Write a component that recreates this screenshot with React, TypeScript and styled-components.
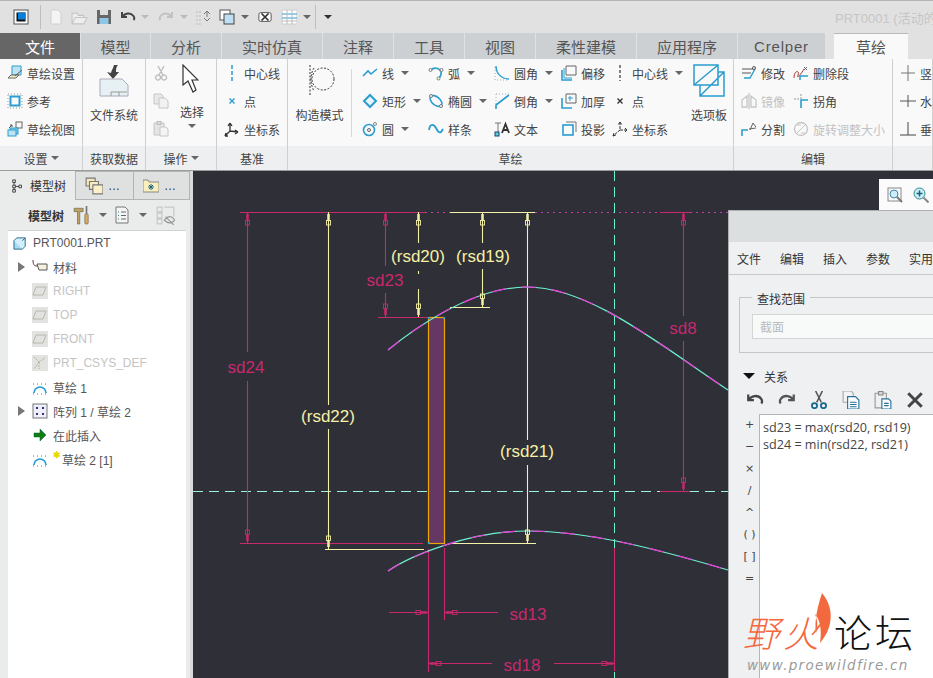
import React from 'react';
import styled, { createGlobalStyle } from 'styled-components';

const FONT = '"Liberation Sans", "Noto Sans CJK SC", sans-serif';
const BLUE = '#2a9dd0';
const PINK = '#c8286e';
const CREAM = '#f5f1a6';

const GlobalStyle = createGlobalStyle`
  html, body {
    margin: 0;
    padding: 0;
    overflow: hidden;
    background: #2f2f37;
  }
  * {
    box-sizing: border-box;
  }
`;

const Page = styled.div`
  width: 933px;
  height: 678px;
  display: flex;
  flex-direction: column;
  overflow: hidden;
  font-family: ${FONT};
  font-size: 12px;
  color: #444;
`;

/* ---------- icons ---------- */

const icons: Record<string, React.ReactNode> = {
  app: (
    <>
      <rect x="1" y="1" width="14" height="14" fill="#fff" stroke="#555" />
      <rect x="3.5" y="3.5" width="9" height="9" fill="#111" />
      <rect x="5" y="3.5" width="7.5" height="7" fill="#0a7fd8" />
    </>
  ),
  newFile: <path d="M3 1h7l3 3v11H3z" fill="#f4f4f4" stroke="#cfcfcf" />,
  open: <path d="M1 14V4h5l1 2h5v2M1 14l3-6h11l-3 6z" fill="#eee" stroke="#c4c4c4" />,
  save: (
    <>
      <path d="M1 1h14v14H1z" fill="#666" />
      <rect x="4" y="1" width="8" height="5" fill="#ddd" />
      <rect x="3.5" y="9" width="9" height="6" fill="#8ec6e6" />
    </>
  ),
  undo: <path d="M2 3v5h5M2.5 8c2-4 8-5 11-1 1 1.500 1 3 0 4" stroke="#444" strokeWidth="2" />,
  redo: <path d="M14 3v5H9M13.500 8c-2-4-8-5-11-1-1 1.500-1 3 0 4" stroke="#c2c2c2" strokeWidth="2" />,
  regen: (
    <>
      <path d="M1 3h5M1 7h6M1 11h6M1 15h5" stroke="#bbb" strokeDasharray="2 1" />
      <path d="M9 5l3-3 3 3M12 2v6M9 9l3 3 3-3" stroke="#777" />
    </>
  ),
  windows: (
    <>
      <rect x="1" y="1" width="10" height="10" fill="#fff" stroke="#555" />
      <rect x="5" y="5" width="10" height="10" fill="#bfe0f2" stroke="#444" />
    </>
  ),
  closeX: (
    <>
      <rect x="1" y="3" width="14" height="10" rx="2" fill="#fff" stroke="#444" />
      <path d="M4 4l8 8M12 4l-8 8" stroke="#333" strokeWidth="2" />
    </>
  ),
  gridView: (
    <>
      <rect x="1" y="1" width="15" height="14" fill="#fff" stroke="#ccc" />
      <path d="M1 5h15M1 9h15" stroke={BLUE} />
      <path d="M1 12h15M6 1v14M11 1v14" stroke="#bbb" />
    </>
  ),
  sketchSetup: (
    <>
      <path d="M5 1h9v9H5z" fill="#bfe2f3" stroke={BLUE} />
      <path d="M1 13l3-3h8l-3 3z" fill="#f5efc8" stroke="#666" />
      <path d="M8 11l7-6" stroke="#555" />
    </>
  ),
  reference: (
    <>
      <rect x="1" y="1" width="14" height="14" stroke="#999" strokeDasharray="1 2" />
      <rect x="3.500" y="3.500" width="9" height="9" stroke={BLUE} strokeWidth="2" />
    </>
  ),
  sketchView: (
    <>
      <rect x="9" y="1" width="6" height="6" stroke="#666" />
      <path d="M2 7l3-3M5 4H3M5 4v2" stroke="#555" />
      <rect x="3" y="7" width="8" height="6" fill="#8ccbe9" stroke={BLUE} />
      <rect x="1" y="9" width="8" height="6" fill="#bfe2f3" stroke={BLUE} />
    </>
  ),
  cut: <path d="M5 1l5 9M11 1l-5 9M5 10a2.500 2.500 0 1 0 .1 0M11 10a2.500 2.500 0 1 0 .1 0" stroke="#bdbdbd" strokeWidth="1.400" />,
  copy: (
    <>
      <path d="M1 1h7l2 2v8H1z" fill="#e8e8e8" stroke="#c6c6c6" />
      <path d="M6 5h6l3 3v7H6z" fill="#f2f2f2" stroke="#c6c6c6" />
    </>
  ),
  paste: (
    <>
      <path d="M1 2h10v12H1z" fill="#e4e4e4" stroke="#c6c6c6" />
      <rect x="4" y="0.500" width="4" height="3" fill="#ddd" stroke="#bbb" />
      <path d="M7 6h6l2 2v7H7z" fill="#f4f4f4" stroke="#c6c6c6" />
    </>
  ),
  centerlineBlue: <path d="M8 0v16" stroke={BLUE} strokeWidth="1.500" strokeDasharray="4 2" />,
  centerlineDark: <path d="M8 0v16" stroke="#333" strokeWidth="1.200" strokeDasharray="3 2" />,
  pointBlue: <path d="M5.500 5.500l5 5M10.500 5.500l-5 5" stroke={BLUE} strokeWidth="1.400" />,
  pointDark: <path d="M5.500 5.500l5 5M10.500 5.500l-5 5" stroke="#333" strokeWidth="1.400" />,
  csys: <path d="M6 2v8M6 2L4 5M6 2l2 3M6 10l8 1M14 11l-3-2M14 11l-3 2M6 10l-5 5M1 15l1-3M1 15l3 0" stroke="#333" strokeWidth="1.300" />,
  csysDashed: <path d="M8 1v8M8 1L6 4M8 1l2 3M8 9h7M15 9l-2-2M15 9l-2 2M8 9l-7 6M1 15l1-3M1 15l3-1" stroke="#333" strokeDasharray="3 1" />,
  line: <path d="M1 11l5-5 3 3 6-5" stroke={BLUE} strokeWidth="1.600" />,
  rect: <path d="M8 2l6 6-6 6-6-6z" stroke={BLUE} strokeWidth="2" fill="#e8f5fb" />,
  circle: (
    <>
      <circle cx="7" cy="9" r="5.500" stroke={BLUE} strokeWidth="1.600" />
      <circle cx="7" cy="9" r="1.500" stroke="#666" />
      <circle cx="13" cy="3" r="1.500" stroke="#888" />
    </>
  ),
  arc: (
    <>
      <path d="M3 5a6 6 0 0 1 10 2c.5 2 0 4-2 6" stroke={BLUE} strokeWidth="1.600" />
      <circle cx="2.500" cy="5" r="1.500" fill="#fff" stroke="#777" />
      <circle cx="13.500" cy="5" r="1.500" fill="#fff" stroke="#777" />
      <circle cx="10.500" cy="13.500" r="1.500" fill="#fff" stroke="#777" />
    </>
  ),
  ellipse: (
    <>
      <ellipse cx="8" cy="8" rx="7" ry="4" transform="rotate(40 8 8)" stroke={BLUE} strokeWidth="1.600" />
      <circle cx="3" cy="3" r="1.500" fill="#fff" stroke="#777" />
      <circle cx="13" cy="13" r="1.500" fill="#fff" stroke="#777" />
    </>
  ),
  spline: <path d="M1 9c1-7 5-6 7-2s4 7 7 1" stroke={BLUE} strokeWidth="1.800" />,
  fillet: (
    <>
      <path d="M1 2v13h13" stroke="#aaa" strokeDasharray="1 2" />
      <path d="M2 1c0 7 5 13 13 13" stroke={BLUE} strokeWidth="1.400" />
    </>
  ),
  chamfer: (
    <>
      <path d="M2 1h13M2 1v14" stroke="#aaa" strokeDasharray="1 2" />
      <path d="M15 2L2 12v4" stroke={BLUE} strokeWidth="1.600" />
    </>
  ),
  text: (
    <>
      <path d="M1 2h6M4 2v10" stroke="#777" />
      <path d="M8 12l3.500-9 3.500 9M9.500 9h4" stroke="#333" strokeWidth="1.800" />
      <rect x="1" y="11" width="4" height="4" fill="#6cc" stroke="#147" />
    </>
  ),
  offset: (
    <>
      <path d="M5 1h10v9H5z" stroke="#666" />
      <path d="M1 5v10h10" stroke={BLUE} strokeWidth="1.600" />
      <path d="M3 3v10h8" stroke={BLUE} />
    </>
  ),
  thicken: (
    <>
      <path d="M5 1h10v9H5z" stroke="#666" />
      <path d="M1 5v10h10" stroke={BLUE} strokeWidth="1.600" />
      <path d="M9 3v5M7 5h5" stroke={BLUE} />
    </>
  ),
  project: (
    <>
      <path d="M5 1h10v10" stroke="#777" />
      <rect x="2" y="4" width="10" height="10" stroke={BLUE} strokeWidth="1.600" />
    </>
  ),
  modify: (
    <>
      <path d="M1 4h11M1 8h9" stroke="#555" />
      <path d="M3 13h6l5-9" stroke={BLUE} strokeWidth="1.400" />
      <circle cx="13" cy="3" r="1.500" stroke="#555" />
    </>
  ),
  deleteSeg: (
    <>
      <path d="M1 13c0-8 6-8 4-3s4-2 6-6" stroke="#a33" />
      <path d="M7 15v-4h8" stroke={BLUE} strokeWidth="1.500" />
      <path d="M11 2l3 3M14 2l-3 3" stroke="#666" />
    </>
  ),
  mirror: <path d="M8 0v16M6 3L1 7v7h5zM10 3l5 4v7h-5z" stroke="#c6c6c6" strokeWidth="1.300" />,
  corner: (
    <>
      <path d="M1 6h6M8 1v6" stroke="#999" strokeDasharray="2 1" />
      <path d="M15 7H8v8" stroke={BLUE} strokeWidth="1.600" />
    </>
  ),
  divide: (
    <>
      <path d="M1 15V9h6" stroke={BLUE} strokeWidth="1.600" />
      <path d="M8 8l7-1M9 9l3-7 3 4" stroke="#666" />
    </>
  ),
  rotate: (
    <>
      <circle cx="8" cy="8" r="6.500" stroke="#c6c6c6" strokeWidth="1.300" />
      <path d="M4 12l8-8M4 4h4M12 12H8" stroke="#c6c6c6" />
    </>
  ),
  vertical: <path d="M8 0v16M1 8h14" stroke="#777" />,
  horizontal: <path d="M8 2v12M0 8h16" stroke="#555" />,
  perpendicular: <path d="M8 1v13M0 14h16" stroke="#444" />,
  box: (
    <>
      <path d="M1 5h9v9H1z" fill="#a6dcf3" stroke="#268" />
      <path d="M1 5l3-3h9v9l-3 3" fill="#d2effb" stroke="#268" />
      <path d="M10 5l3-3" stroke="#268" />
    </>
  ),
  tag: (
    <>
      <path d="M1 1c0 6 2 6 5 6" stroke="#633" />
      <path d="M5 5h10v6H7z" fill="#f7f2e0" stroke="#555" />
    </>
  ),
  plane: (
    <>
      <rect width="16" height="16" fill="#e2e2e0" />
      <path d="M4 4h10l-3 8H1z" stroke="#b8b8a6" />
    </>
  ),
  csysTree: (
    <>
      <rect width="16" height="16" fill="#e2e2e0" />
      <path d="M2 2l5 5 6-4M7 7v7M7 7l-5 7" stroke="#b0b09c" strokeDasharray="2 1" />
    </>
  ),
  sketchTree: (
    <>
      <path d="M2 14a6 6 0 0 1 12 0" stroke={BLUE} strokeWidth="1.700" />
      <path d="M1 5h14M1 15h14" stroke="#777" strokeDasharray="1 3" />
    </>
  ),
  pattern: (
    <>
      <rect x="1" y="1" width="14" height="14" fill="#eef" stroke="#777" />
      <path d="M4 4h2v2H4zM10 4h2v2h-2zM4 10h2v2H4zM10 10h2v2h-2z" fill="#336" />
    </>
  ),
  insertArrow: <path d="M2 6h6V2l6 6-6 6v-4H2z" fill="#0f7d0f" stroke="#063" strokeWidth="0.500" />,
  treeNodes: (
    <>
      <path d="M2 1h3v3H2zM2 7h3v3H2zM2 12h3v3H2zM9 7h3v3H9zM5 8.500h4M3.500 4v3M3.500 10v2" stroke="#333" />
    </>
  ),
  folders: (
    <>
      <path d="M1 8V1h8v7z" fill="#f6e8b8" stroke="#777" />
      <path d="M4 11V4h8v7z" fill="#f8ecc0" stroke="#777" />
      <path d="M7 15V7h9v8z" fill="#fbf0c8" stroke="#777" />
    </>
  ),
  starFolder: (
    <>
      <path d="M0 14V2h5l1 2h10v10z" fill="#faeebc" stroke="#888" />
      <path d="M8 6v6M5 9h6M6 7l4 4M10 7l-4 4" stroke="#16688c" />
    </>
  ),
  tools: (
    <>
      <path d="M1 2h8v3H6v11H4V5H1z" fill="#c2a263" stroke="#665" strokeWidth="0.600" />
      <path d="M12 0v7" stroke="#777" strokeWidth="1.500" />
      <rect x="10.500" y="7" width="3" height="9" rx="1" fill="#d6ac5e" stroke="#765" strokeWidth="0.600" />
    </>
  ),
  listDoc: (
    <>
      <path d="M2 0h9l3 3v13H2z" fill="#f5f5f5" stroke="#777" />
      <path d="M7 5h5M7 8.500h5M7 12h5" stroke="#667" />
      <path d="M4 5h1M4 8.500h1M4 12h1" stroke="#287" />
    </>
  ),
  treeHide: (
    <>
      <path d="M1 1h4v4H1zM1 6h4v4H1zM1 11h4v4H1zM7 1h8v8" stroke="#c8c8c8" />
      <path d="M7 12c3-4 6-4 9 0-3 3-6 3-9 0zM8 9l7 7" stroke="#999" />
    </>
  ),
  search: (
    <>
      <rect x="1" y="1" width="13" height="13" stroke="#888" />
      <circle cx="7" cy="7" r="4" fill="#cdebf8" stroke="#48a" />
      <path d="M10 10l5 5" stroke="#777" strokeWidth="2" />
    </>
  ),
  zoomIn: (
    <>
      <circle cx="6.500" cy="6.500" r="5.500" fill="#cdebf8" stroke="#388" />
      <path d="M6.500 3.500v6M3.500 6.500h6" stroke="#167" strokeWidth="1.500" />
      <path d="M10.500 10.500l5 5" stroke="#888" strokeWidth="2" />
    </>
  ),
  dlgUndo: <path d="M2 3v5h5M2.500 8c2-4 8-5 11-1 1 1.500 1 3 0 4" stroke="#444" strokeWidth="2" />,
  dlgRedo: <path d="M14 3v5H9M13.500 8c-2-4-8-5-11-1-1 1.500-1 3 0 4" stroke="#555" strokeWidth="2" />,
  dlgCut: (
    <>
      <path d="M5 0l5 10M11 0L6 10" stroke="#555" strokeWidth="1.400" />
      <circle cx="4" cy="13" r="2.300" stroke="#17688e" strokeWidth="1.600" />
      <circle cx="12" cy="13" r="2.300" stroke="#17688e" strokeWidth="1.600" />
    </>
  ),
  dlgCopy: (
    <>
      <path d="M1 0h7l2 2v8H1z" fill="#f3f3f3" stroke="#aaa" />
      <path d="M5 5h7l3 3v8H5z" fill="#fff" stroke="#27709a" />
      <path d="M7 10h6M7 12h6M7 14h6" stroke="#27709a" />
    </>
  ),
  dlgPaste: (
    <>
      <path d="M1 2h10v13H1z" fill="#f0f0f0" stroke="#999" />
      <rect x="4" y="0.500" width="4" height="3" fill="#ddd" stroke="#888" />
      <path d="M7 7h6l2 2v7H7z" fill="#fff" stroke="#27709a" />
      <path d="M9 11h4M9 13h4" stroke="#27709a" />
    </>
  ),
  dlgDelete: <path d="M2 2l12 12M14 2L2 14" stroke="#444" strokeWidth="2.600" />,
};

const IconSvg = styled.svg`
  display: block;
  flex: none;
`;

const Icon: React.FC<{ name: string; size?: number; height?: number }> = ({ name, size = 16, height }) => (
  <IconSvg width={size} height={height ?? size} viewBox="0 0 16 16" fill="none">
    {icons[name]}
  </IconSvg>
);

const Caret = styled.span<{ $color?: string; $size?: number }>`
  display: block;
  flex: none;
  width: 0;
  height: 0;
  border-left: ${(p) => p.$size ?? 4}px solid transparent;
  border-right: ${(p) => p.$size ?? 4}px solid transparent;
  border-top: ${(p) => p.$size ?? 4}px solid ${(p) => p.$color ?? '#666'};
`;

/* ---------- title bar ---------- */

const TitleBar = styled.div`
  height: 33px;
  flex: none;
  display: flex;
  align-items: center;
  padding-left: 13px;
  background: #e1e1e1;
  border-top: 1px solid #b5b5b5;
  position: relative;
`;

const QuickGroup = styled.div<{ $gap?: number; $left?: number }>`
  display: flex;
  align-items: center;
  gap: ${(p) => p.$gap ?? 0}px;
  margin-left: ${(p) => p.$left ?? 0}px;
`;

const QuickSep = styled.div<{ $left: number }>`
  width: 1px;
  height: 24px;
  background: #bdbdbd;
  margin-left: ${(p) => p.$left}px;
`;

const TitleText = styled.div`
  margin-left: auto;
  width: 98px;
  white-space: nowrap;
  overflow: hidden;
  font-size: 13px;
  color: #c6c6c6;
`;

/* ---------- tabs ---------- */

const TabBar = styled.div`
  height: 26px;
  flex: none;
  display: flex;
  background: #e1e1e1;
`;

const Tab = styled.div<{ $width: number; $kind?: 'file' | 'active'; $gap?: number }>`
  width: ${(p) => p.$width}px;
  margin-left: ${(p) => p.$gap ?? 0}px;
  margin-right: 1px;
  display: flex;
  align-items: center;
  justify-content: center;
  font-size: 15px;
  background: ${(p) => (p.$kind === 'file' ? '#666' : p.$kind === 'active' ? '#f9f9f9' : '#cdd0d3')};
  color: ${(p) => (p.$kind === 'file' ? '#fff' : '#555')};
  border-top: ${(p) => (p.$kind === 'active' ? '1px solid #b8b8b8' : 'none')};
`;

const LatinTabLabel = styled.span`
  letter-spacing: 0.8px;
`;

/* ---------- ribbon ---------- */

const Ribbon = styled.div`
  height: 112px;
  flex: none;
  display: flex;
  background: #f9f9f9;
  border-bottom: 1px solid #9c9c9c;
`;

const Group = styled.div<{ $width?: number }>`
  width: ${(p) => (p.$width ? `${p.$width}px` : 'auto')};
  flex: ${(p) => (p.$width ? 'none' : '1')};
  display: flex;
  flex-direction: column;
  border-right: 1px solid #cfcfcf;
  overflow: hidden;
`;

const GroupBody = styled.div<{ $left?: number }>`
  height: 87px;
  display: flex;
  padding-left: ${(p) => p.$left ?? 0}px;
`;

const GroupFooter = styled.div`
  flex: 1;
  display: flex;
  align-items: center;
  justify-content: center;
  gap: 3px;
  background: #eeeff0;
  color: #444;
  white-space: nowrap;
`;

const ToolCol = styled.div<{ $width: number }>`
  width: ${(p) => p.$width}px;
  flex: none;
  display: flex;
  flex-direction: column;
`;

const ToolRow = styled.div<{ $off?: boolean }>`
  height: 28px;
  display: flex;
  align-items: center;
  gap: 4px;
  white-space: nowrap;
  color: ${(p) => (p.$off ? '#c2c2c2' : '#444')};
`;

const ToolCaret = styled(Caret)`
  margin-left: 3px;
`;

const LargeTool = styled.div<{ $width: number }>`
  width: ${(p) => p.$width}px;
  flex: none;
  display: flex;
  flex-direction: column;
  align-items: center;
  padding-top: 5px;
`;

const LargeLabel = styled.div`
  height: 28px;
  margin-top: 3px;
  display: flex;
  align-items: center;
  white-space: nowrap;
`;

const Divider = styled.div`
  width: 1px;
  height: 68px;
  margin: 10px 10px 0 0;
  background: #d8d8d8;
  flex: none;
`;

type Tool = [string, string, boolean?, boolean?];

const Tools: React.FC<{ width: number; items: Tool[] }> = ({ width, items }) => (
  <ToolCol $width={width}>
    {items.map(([icon, label, caret, off]) => (
      <ToolRow key={label} $off={off}>
        <Icon name={icon} />
        {label}
        {caret && <ToolCaret />}
      </ToolRow>
    ))}
  </ToolCol>
);

const SystemIcon = () => (
  <IconSvg width="30" height="33" viewBox="0 0 30 33" fill="none">
    <path d="M15 1c-1 4-3 6-3 8l-4-1 6 7 6-7-3 0c0-3 0-5 2-7z" fill="#444" />
    <path d="M1 15h22l6 6v11H1z" fill="#e7f0f3" stroke="#aab" />
    <path d="M12 28h16M12 32v-4M20 32v-4" stroke="#999" />
  </IconSvg>
);

const ArrowSvg = styled(IconSvg)`
  margin-right: 3px;
`;

const ArrowIcon = () => (
  <ArrowSvg width="17" height="30" viewBox="0 0 17 30" fill="none">
    <path d="M1 1v20l5-4 5 11 3-2-4-10h6z" fill="#fff" stroke="#333" strokeWidth="1.200" />
  </ArrowSvg>
);

const ConstructionIcon = () => (
  <IconSvg width="30" height="33" viewBox="0 0 30 33" fill="none">
    <circle cx="18" cy="15" r="11" stroke="#333" strokeDasharray="2 1.500" />
    <path d="M5 1v30M9 4c-4 6-4 16 0 23" stroke="#333" strokeDasharray="2 1.500" />
  </IconSvg>
);

const PaletteIcon = () => (
  <IconSvg width="32" height="33" viewBox="0 0 32 33" fill="none">
    <path d="M1 1h24v20H1zM7 21v11h24V8H25M7 32L31 8M1 21L25 1" stroke={BLUE} strokeWidth="1.500" />
  </IconSvg>
);

const SelectCaret = styled(Caret)`
  margin-top: -1px;
`;

/* ---------- workspace ---------- */

const Workspace = styled.div`
  flex: 1;
  display: flex;
  min-height: 0;
`;

const Sidebar = styled.div`
  width: 193px;
  flex: none;
  display: flex;
  flex-direction: column;
  background: #eaecec;
  border-right: 3px solid #d9dbdb;
`;

const SideTabs = styled.div`
  height: 29px;
  flex: none;
  display: flex;
`;

const SideTab = styled.div<{ $active?: boolean; $width: number }>`
  width: ${(p) => p.$width}px;
  display: flex;
  align-items: center;
  gap: 5px;
  padding-left: ${(p) => (p.$active ? 11 : 9)}px;
  background: ${(p) => (p.$active ? '#eaecec' : '#dfe1e1')};
  border-right: 1px solid #b4b4b4;
  border-bottom: ${(p) => (p.$active ? 'none' : '1px solid #b4b4b4')};
  border-top: ${(p) => (p.$active ? 'none' : '1px solid #b4b4b4')};
  color: #333;
`;

const TreeBar = styled.div`
  height: 30px;
  flex: none;
  display: flex;
  align-items: center;
  padding-left: 28px;
  color: #333;
  font-weight: bold;
`;

const TreeBarTools = styled.div`
  display: flex;
  align-items: center;
  margin-left: 9px;
  font-weight: normal;
`;

const TreeGap = styled.div<{ $width: number }>`
  width: ${(p) => p.$width}px;
  display: flex;
  justify-content: center;
  flex: none;
`;

const Tree = styled.div`
  flex: 1;
  margin: 0 4px 0 8px;
  background: #fff;
  border-top: 1px solid #d2d2d2;
`;

const TreeRow = styled.div<{ $off?: boolean; $root?: boolean }>`
  height: 24px;
  display: flex;
  align-items: center;
  gap: 5px;
  padding-left: ${(p) => (p.$root ? 5 : 24)}px;
  position: relative;
  color: ${(p) => (p.$off ? '#c4c4c4' : '#555')};
  white-space: nowrap;
`;

const Expander = styled.span`
  position: absolute;
  left: 10px;
  top: 7px;
  width: 0;
  height: 0;
  border-top: 5px solid transparent;
  border-bottom: 5px solid transparent;
  border-left: 7px solid #777;
`;

const NewMark = styled.span`
  display: block;
  width: 7px;
  margin: -7px -3px 0 0;
  color: #e8d800;
  font-size: 9px;
  line-height: 9px;
  font-weight: bold;
`;

const Canvas = styled.div`
  flex: 1;
  position: relative;
  background: #2f2f37;
  overflow: hidden;
`;

const Drawing = styled.svg`
  display: block;
`;

const ViewStrip = styled.div`
  position: absolute;
  left: 686px;
  top: 8px;
  width: 60px;
  height: 32px;
  display: flex;
  align-items: center;
  gap: 10px;
  padding-left: 8px;
  background: #fbfbfb;
`;

/* ---------- relations dialog ---------- */

const Dialog = styled.div`
  position: absolute;
  left: 535px;
  top: 39px;
  width: 220px;
  height: 469px;
  display: flex;
  flex-direction: column;
  background: #eef0f1;
  border: 1px solid #aeb0b0;
  border-right: none;
`;

const DialogTitle = styled.div`
  height: 31px;
  flex: none;
  background: #dcdfdf;
`;

const DialogMenu = styled.div`
  height: 33px;
  flex: none;
  display: flex;
  align-items: center;
  gap: 19px;
  padding-left: 8px;
  color: #333;
  border-bottom: 1px solid #c6c8c8;
  white-space: nowrap;
`;

const Fieldset = styled.div`
  position: relative;
  height: 56px;
  margin: 22px 0 0 10px;
  padding: 16px 0 0 12px;
  border: 1px solid #c4c6c6;
  border-right: none;
`;

const Legend = styled.span`
  position: absolute;
  left: 12px;
  top: -8px;
  padding: 0 5px;
  background: #eef0f1;
  color: #333;
`;

const FieldInput = styled.div`
  height: 25px;
  display: flex;
  align-items: center;
  padding-left: 7px;
  background: #f8f9f9;
  border: 1px solid #d4d6d6;
  border-right: none;
  color: #bbb;
`;

const SectionHead = styled.div`
  height: 16px;
  margin: 15px 0 0 14px;
  display: flex;
  align-items: center;
  gap: 9px;
  color: #333;
`;

const DialogTools = styled.div`
  height: 28px;
  margin-top: 2px;
  display: flex;
  align-items: center;
  gap: 14px;
  padding-left: 17px;
`;

const Editor = styled.div`
  flex: 1;
  display: flex;
  min-height: 0;
`;

const Gutter = styled.div`
  width: 30px;
  flex: none;
  display: flex;
  flex-direction: column;
  margin-top: -1px;
  padding-left: 11px;
  color: #444;
`;

const GutterKey = styled.div`
  height: 22px;
  display: flex;
  align-items: center;
  justify-content: center;
  font-size: 11px;
  font-family: "DejaVu Sans", sans-serif;
`;

const EditorText = styled.div`
  flex: 1;
  padding: 4px 0 0 3px;
  background: #fff;
  border: 1px solid #b4b6b6;
  border-right: none;
  border-bottom: none;
  font-family: "Open Sans", sans-serif;
  font-size: 12.6px;
  line-height: 17px;
  color: #444;
  white-space: pre;
`;

/* ---------- watermark ---------- */

const Watermark = styled.div`
  position: absolute;
  left: 553px;
  top: 420px;
  width: 190px;
  height: 86px;
`;

const Flame = styled.svg`
  position: absolute;
  left: 60px;
  top: 2px;
`;

const BrandRed = styled.span`
  position: absolute;
  left: -3px;
  top: 20px;
  font-size: 36px;
  line-height: 40px;
  font-style: italic;
  font-weight: 300;
  color: #f4683e;
  font-family: "Noto Sans CJK SC", sans-serif;
  letter-spacing: 4px;
`;

const BrandBlack = styled.span`
  position: absolute;
  left: 88px;
  top: 20px;
  font-size: 38px;
  line-height: 40px;
  font-weight: 300;
  color: #111;
  font-family: "Noto Sans CJK SC", sans-serif;
  letter-spacing: 3px;
`;

const BrandUrl = styled.span`
  position: absolute;
  left: 1px;
  top: 67px;
  font-size: 13.5px;
  line-height: 14px;
  font-style: italic;
  letter-spacing: 1.3px;
  color: #9a9a9a;
  font-family: "DejaVu Sans", sans-serif;
  white-space: nowrap;
`;

/* ---------- sketch ---------- */

const DimArrow: React.FC<{ x: number; y: number; angle?: number; color: string }> = ({ x, y, angle = 0, color }) => (
  <g transform={`translate(${x} ${y}) rotate(${angle})`}>
    <rect x="-1.250" y="1" width="2.500" height="6.500" fill={color} />
    <rect x="-2" y="7.500" width="4" height="4.500" fill="none" stroke={color} strokeWidth="0.900" />
  </g>
);

type Seg = [number, number, number, number];

const pinkLines: Seg[] = [
  [240, 212.5, 425, 212.5],
  [247.5, 212, 247.5, 352],
  [247.5, 381, 247.5, 543],
  [385.5, 212, 385.5, 266],
  [385.5, 293, 385.5, 317],
  [378, 317.5, 428, 317.5],
  [240, 543.5, 423, 543.5],
  [660, 212.5, 690, 212.5],
  [683.5, 212, 683.5, 316],
  [683.5, 341, 683.5, 491],
  [660, 491.5, 690, 491.5],
  [428.5, 549, 428.5, 672],
  [444.5, 548, 444.5, 620],
  [614.5, 548, 614.5, 671],
  [389, 612.5, 428, 612.5],
  [444, 612.5, 498, 612.5],
  [428, 663.5, 492, 663.5],
  [554, 663.5, 614, 663.5],
];

const creamLines: Seg[] = [
  [450, 212.5, 535, 212.5],
  [328.5, 212, 328.5, 405],
  [328.5, 429, 328.5, 549],
  [418.5, 212, 418.5, 243],
  [418.5, 271, 418.5, 274],
  [418.5, 289, 418.5, 317],
  [482.5, 212, 482.5, 243],
  [482.5, 269, 482.5, 307],
  [450, 307.5, 490, 307.5],
  [527.5, 212, 527.5, 440],
  [527.5, 465, 527.5, 543],
  [450, 543.5, 536, 543.5],
  [325, 549.5, 424, 549.5],
];

const pinkArrows: [number, number, number?][] = [
  [247.5, 213],
  [385.5, 213],
  [385.5, 316, 180],
  [683.5, 213],
  [683.5, 490, 180],
  [247.5, 542, 180],
  [428, 612.5, 90],
  [445, 612.5, -90],
  [429, 663.5, -90],
  [614, 663.5, 90],
];

const creamArrows: [number, number, number?][] = [
  [328.5, 213],
  [418.5, 213],
  [418.5, 316, 180],
  [482.5, 213],
  [482.5, 306, 180],
  [527.5, 213],
  [527.5, 542, 180],
  [328.5, 548, 180],
];

const labels: [string, number, number, string][] = [
  ['sd24', 246, 373, PINK],
  ['sd23', 385, 286, PINK],
  ['sd8', 683, 334, PINK],
  ['sd13', 528, 620, PINK],
  ['sd18', 522, 671, PINK],
  ['(rsd20)', 418, 262, CREAM],
  ['(rsd19)', 483, 262, CREAM],
  ['(rsd22)', 328, 422, CREAM],
  ['(rsd21)', 527, 457, CREAM],
];

const Curve: React.FC<{ d: string }> = ({ d }) => (
  <>
    <path d={d} fill="none" stroke="#6ff2d2" strokeWidth="1.200" />
    <path d={d} fill="none" stroke="#ee36d8" strokeWidth="1.200" strokeDasharray="14 16" />
  </>
);

const Sketch = () => (
  <Drawing width="740" height="507" viewBox="193 171 740 507">
    <path d="M425 212.500H450M535 212.500H660M690 212.500H728" stroke="#c040b0" strokeDasharray="2 4" />
    <path d="M193 491.500H728" stroke="#9ff5da" strokeDasharray="10 6" />
    <path d="M614.500 171V548M614.500 672V678" stroke="#6ff2d2" strokeDasharray="10 6" />
    <rect x="428.500" y="317.500" width="16" height="226" fill="#643862" stroke="#f0a400" strokeWidth="1.200" />
    {pinkLines.map(([x1, y1, x2, y2]) => (
      <line key={`${x1}-${y1}-${x2}`} x1={x1} y1={y1} x2={x2} y2={y2} stroke={PINK} strokeWidth="1.100" />
    ))}
    {creamLines.map(([x1, y1, x2, y2]) => (
      <line key={`${x1}-${y1}-${x2}`} x1={x1} y1={y1} x2={x2} y2={y2} stroke={CREAM} strokeWidth="1.100" />
    ))}
    <Curve d="M388 350C410 332 470 287 527 287C590 287 660 345 728 390" />
    <Curve d="M388 571C410 556 470 531 527 531C590 531 660 550 728 570" />
    {pinkArrows.map(([x, y, a]) => (
      <DimArrow key={`${x}-${y}`} x={x} y={y} angle={a} color={PINK} />
    ))}
    {creamArrows.map(([x, y, a]) => (
      <DimArrow key={`${x}-${y}`} x={x} y={y} angle={a} color={CREAM} />
    ))}
    <path d="M428 317h2v2h-2zM443 317h2v2h-2zM428 542h2v2h-2z" fill="#2aa8d8" />
    {labels.map(([text, x, y, color]) => (
      <text key={text} x={x} y={y} fill={color} fontSize="17" textAnchor="middle" fontFamily={FONT}>
        {text}
      </text>
    ))}
  </Drawing>
);

/* ---------- page ---------- */

const tabs: { label: string; width: number; kind?: 'file' | 'active'; gap?: number }[] = [
  { label: '文件', width: 80, kind: 'file' },
  { label: '模型', width: 69 },
  { label: '分析', width: 70 },
  { label: '实时仿真', width: 100 },
  { label: '注释', width: 70 },
  { label: '工具', width: 70 },
  { label: '视图', width: 70 },
  { label: '柔性建模', width: 100 },
  { label: '应用程序', width: 100 },
  { label: 'Crelper', width: 87 },
  { label: '草绘', width: 74, kind: 'active', gap: 8 },
];

const treeRows: { icon: string; label: string; off?: boolean; expand?: boolean; isNew?: boolean }[] = [
  { icon: 'tag', label: '材料', expand: true },
  { icon: 'plane', label: 'RIGHT', off: true },
  { icon: 'plane', label: 'TOP', off: true },
  { icon: 'plane', label: 'FRONT', off: true },
  { icon: 'csysTree', label: 'PRT_CSYS_DEF', off: true },
  { icon: 'sketchTree', label: '草绘 1' },
  { icon: 'pattern', label: '阵列 1 / 草绘 2', expand: true },
  { icon: 'insertArrow', label: '在此插入' },
  { icon: 'sketchTree', label: '草绘 2 [1]', isNew: true },
];

const gutterKeys = ['+', '−', '×', '/', '^', '( )', '[ ]', '='];

const App: React.FC = () => (
  <Page>
    <GlobalStyle />
    <TitleBar>
      <Icon name="app" />
      <QuickSep $left={11} />
      <QuickGroup $left={7}>
        <Icon name="newFile" />
      </QuickGroup>
      <QuickGroup $left={7}>
        <Icon name="open" size={17} />
      </QuickGroup>
      <QuickGroup $left={8}>
        <Icon name="save" />
      </QuickGroup>
      <QuickGroup $left={8} $gap={5}>
        <Icon name="undo" />
        <Caret $color="#bbb" />
      </QuickGroup>
      <QuickGroup $left={9} $gap={6}>
        <Icon name="redo" />
        <Caret $color="#bbb" />
      </QuickGroup>
      <QuickGroup $left={7}>
        <Icon name="regen" />
      </QuickGroup>
      <QuickGroup $left={8} $gap={6}>
        <Icon name="windows" />
        <Caret />
      </QuickGroup>
      <QuickGroup $left={9}>
        <Icon name="closeX" size={14} />
      </QuickGroup>
      <QuickGroup $left={9} $gap={6}>
        <Icon name="gridView" />
        <Caret />
      </QuickGroup>
      <QuickSep $left={4} />
      <QuickGroup $left={8}>
        <Caret $color="#333" />
      </QuickGroup>
      <TitleText>PRT0001 (活动的</TitleText>
    </TitleBar>

    <TabBar>
      {tabs.map((t) => (
        <Tab key={t.label} $width={t.width} $kind={t.kind} $gap={t.gap}>
          {t.label === 'Crelper' ? <LatinTabLabel>{t.label}</LatinTabLabel> : t.label}
        </Tab>
      ))}
    </TabBar>

    <Ribbon>
      <Group $width={83}>
        <GroupBody $left={7}>
          <Tools
            width={75}
            items={[
              ['sketchSetup', '草绘设置'],
              ['reference', '参考'],
              ['sketchView', '草绘视图'],
            ]}
          />
        </GroupBody>
        <GroupFooter>
          设置
          <Caret />
        </GroupFooter>
      </Group>

      <Group $width={63}>
        <GroupBody>
          <LargeTool $width={62}>
            <SystemIcon />
            <LargeLabel>文件系统</LargeLabel>
          </LargeTool>
        </GroupBody>
        <GroupFooter>获取数据</GroupFooter>
      </Group>

      <Group $width={71}>
        <GroupBody $left={7}>
          <Tools
            width={16}
            items={[
              ['cut', ''],
              ['copy', ' '],
              ['paste', '  '],
            ]}
          />
          <LargeTool $width={46}>
            <ArrowIcon />
            <LargeLabel>选择</LargeLabel>
            <SelectCaret />
          </LargeTool>
        </GroupBody>
        <GroupFooter>
          操作
          <Caret />
        </GroupFooter>
      </Group>

      <Group $width={71}>
        <GroupBody $left={7}>
          <Tools
            width={63}
            items={[
              ['centerlineBlue', '中心线'],
              ['pointBlue', '点'],
              ['csys', '坐标系'],
            ]}
          />
        </GroupBody>
        <GroupFooter>基准</GroupFooter>
      </Group>

      <Group $width={446}>
        <GroupBody>
          <LargeTool $width={63}>
            <ConstructionIcon />
            <LargeLabel>构造模式</LargeLabel>
          </LargeTool>
          <Divider />
          <Tools
            width={66}
            items={[
              ['line', '线', true],
              ['rect', '矩形', true],
              ['circle', '圆', true],
            ]}
          />
          <Tools
            width={66}
            items={[
              ['arc', '弧', true],
              ['ellipse', '椭圆', true],
              ['spline', '样条'],
            ]}
          />
          <Tools
            width={67}
            items={[
              ['fillet', '圆角', true],
              ['chamfer', '倒角', true],
              ['text', '文本'],
            ]}
          />
          <Tools
            width={51}
            items={[
              ['offset', '偏移'],
              ['thicken', '加厚'],
              ['project', '投影'],
            ]}
          />
          <Tools
            width={77}
            items={[
              ['centerlineDark', '中心线', true],
              ['pointDark', '点'],
              ['csysDashed', '坐标系'],
            ]}
          />
          <LargeTool $width={40}>
            <PaletteIcon />
            <LargeLabel>选项板</LargeLabel>
          </LargeTool>
        </GroupBody>
        <GroupFooter>草绘</GroupFooter>
      </Group>

      <Group $width={159}>
        <GroupBody $left={7}>
          <Tools
            width={52}
            items={[
              ['modify', '修改'],
              ['mirror', '镜像', false, true],
              ['divide', '分割'],
            ]}
          />
          <Tools
            width={98}
            items={[
              ['deleteSeg', '删除段'],
              ['corner', '拐角'],
              ['rotate', '旋转调整大小', false, true],
            ]}
          />
        </GroupBody>
        <GroupFooter>编辑</GroupFooter>
      </Group>

      <Group>
        <GroupBody $left={7}>
          <Tools
            width={40}
            items={[
              ['vertical', '竖直'],
              ['horizontal', '水平'],
              ['perpendicular', '垂直'],
            ]}
          />
        </GroupBody>
        <GroupFooter />
      </Group>
    </Ribbon>

    <Workspace>
      <Sidebar>
        <SideTabs>
          <SideTab $active $width={76}>
            <Icon name="treeNodes" size={14} height={18} />
            模型树
          </SideTab>
          <SideTab $width={58}>
            <Icon name="folders" size={18} />…
          </SideTab>
          <SideTab $width={56}>
            <Icon name="starFolder" />…
          </SideTab>
        </SideTabs>
        <TreeBar>
          模型树
          <TreeBarTools>
            <Icon name="tools" size={18} height={20} />
            <TreeGap $width={23}>
              <Caret />
            </TreeGap>
            <Icon name="listDoc" size={16} height={18} />
            <TreeGap $width={26}>
              <Caret />
            </TreeGap>
            <Icon name="treeHide" size={19} />
          </TreeBarTools>
        </TreeBar>
        <Tree>
          <TreeRow $root>
            <Icon name="box" size={15} />
            PRT0001.PRT
          </TreeRow>
          {treeRows.map((r) => (
            <TreeRow key={r.label} $off={r.off}>
              {r.expand && <Expander />}
              <Icon name={r.icon} />
              {r.isNew && <NewMark>✱</NewMark>}
              {r.label}
            </TreeRow>
          ))}
        </Tree>
      </Sidebar>

      <Canvas>
        <Sketch />
        <ViewStrip>
          <Icon name="search" />
          <Icon name="zoomIn" />
        </ViewStrip>
        <Dialog>
          <DialogTitle />
          <DialogMenu>
            <span>文件</span>
            <span>编辑</span>
            <span>插入</span>
            <span>参数</span>
            <span>实用工具</span>
          </DialogMenu>
          <Fieldset>
            <Legend>查找范围</Legend>
            <FieldInput>截面</FieldInput>
          </Fieldset>
          <SectionHead>
            <Caret $color="#111" $size={6} />
            关系
          </SectionHead>
          <DialogTools>
            <Icon name="dlgUndo" size={18} />
            <Icon name="dlgRedo" size={18} />
            <Icon name="dlgCut" size={18} />
            <Icon name="dlgCopy" size={18} />
            <Icon name="dlgPaste" size={18} />
            <Icon name="dlgDelete" size={18} />
          </DialogTools>
          <Editor>
            <Gutter>
              {gutterKeys.map((k) => (
                <GutterKey key={k}>{k}</GutterKey>
              ))}
            </Gutter>
            <EditorText>{'sd23 = max(rsd20, rsd19)\nsd24 = min(rsd22, rsd21)'}</EditorText>
          </Editor>
        </Dialog>
        <Watermark>
          <Flame width="28" height="60" viewBox="0 0 28 60" fill="none">
            <path d="M16 0c12 14 12 34-2 50 2-14 0-24-6-30 4 6 4 14 2 20C8 28 12 12 16 0z" fill="#f4683e" />
          </Flame>
          <BrandRed>野火</BrandRed>
          <BrandBlack>论坛</BrandBlack>
          <BrandUrl>www.proewildfire.cn</BrandUrl>
        </Watermark>
      </Canvas>
    </Workspace>
  </Page>
);

export default App;
